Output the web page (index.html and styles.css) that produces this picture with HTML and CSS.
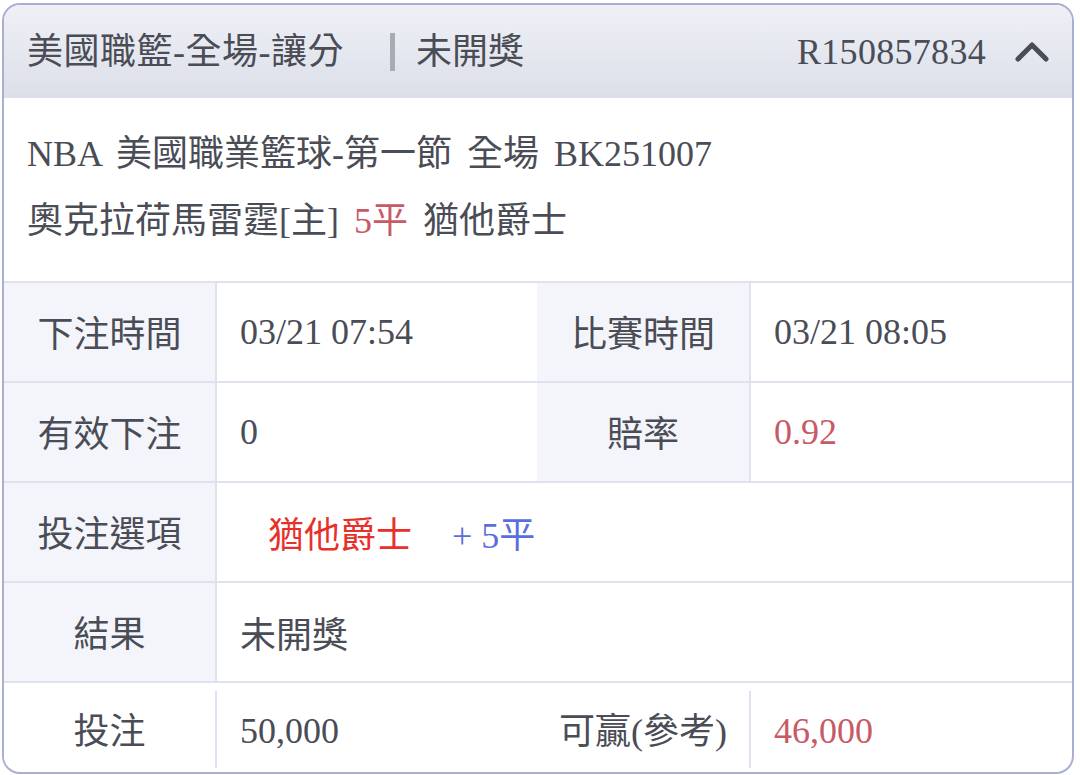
FILE: index.html
```html
<!DOCTYPE html>
<html lang="zh-Hant">
<head>
<meta charset="utf-8">
<title>注單</title>
<link rel="stylesheet" href="styles.css">
</head>
<body>
<div class="card">
  <div class="head">
    <span class="head-title">美國職籃-全場-讓分</span>
    <span class="head-bar"></span>
    <span class="head-status">未開獎</span>
    <span class="head-id">R150857834</span>
    <svg class="chev" width="34" height="22" viewBox="0 0 34 22"><polyline points="3,18 17,4 31,18" fill="none" stroke="#4a4c56" stroke-width="5" stroke-linecap="round" stroke-linejoin="round"/></svg>
  </div>
  <div class="info">
    <div class="info-line">NBA 美國職業籃球-第一節 全場 BK251007</div>
    <div class="info-line">奧克拉荷馬雷霆[主] <span class="red">5平</span> 猶他爵士</div>
  </div>
  <div class="grid">
    <div class="row">
      <div class="lab">下注時間</div>
      <div class="val">03/21 07:54</div>
      <div class="lab">比賽時間</div>
      <div class="val">03/21 08:05</div>
    </div>
    <div class="row">
      <div class="lab">有效下注</div>
      <div class="val">0</div>
      <div class="lab">賠率</div>
      <div class="val red">0.92</div>
    </div>
    <div class="row">
      <div class="lab">投注選項</div>
      <div class="val span3"><span class="pick">猶他爵士</span><span class="hcp">+ 5平</span></div>
    </div>
    <div class="row">
      <div class="lab">結果</div>
      <div class="val span3">未開獎</div>
    </div>
    <div class="row last">
      <div class="lab">投注</div>
      <div class="val">50,000</div>
      <div class="lab">可贏(參考)</div>
      <div class="val red">46,000</div>
    </div>
  </div>
</div>
</body>
</html>
```

FILE: styles.css
```css
html, body {
  margin: 0;
  padding: 0;
  background: #ffffff;
}
body {
  font-family: "Liberation Serif", "Noto Sans CJK TC", serif;
  color: #4a4c56;
  font-size: 36px;
}
.card {
  margin: 3px 6px 0 2px;
  height: 771px;
  box-sizing: border-box;
  border: 2px solid #a9aed3;
  border-radius: 18px;
  overflow: hidden;
  background: #ffffff;
}
.head {
  height: 93px;
  display: flex;
  align-items: center;
  padding: 0 23px 0 23px;
  background: linear-gradient(180deg, #eff0f5 0%, #e6e8f0 50%, #dcdee9 100%);
}
.head-title {
  line-height: 1;
  letter-spacing: 0.5px;
}
.head-bar {
  width: 5px;
  height: 38px;
  background: #a9abb4;
  margin: 0 21px 0 46px;
}
.head-status {
  line-height: 1;
}
.head-id {
  margin-left: auto;
  line-height: 1;
  letter-spacing: 0.3px;
}
.chev {
  margin-left: 29px;
  display: block;
}
.info {
  padding: 23px 0 26px 23px;
}
.info-line {
  line-height: 67px;
  white-space: nowrap;
  word-spacing: 6px;
}
.red {
  color: #c85a65;
}
.grid {
  display: flex;
  flex-direction: column;
}
.row {
  display: grid;
  grid-template-columns: 213px 320px 214px 1fr;
  height: 100px;
  box-sizing: border-box;
  border-top: 2px solid #dfe1ef;
}
.lab {
  display: flex;
  align-items: center;
  justify-content: center;
  background: #f4f5fa;
  border-right: 2px solid #dfe1ef;
  white-space: nowrap;
  padding-bottom: 3px;
}
.val {
  display: flex;
  align-items: center;
  padding-left: 23px;
  white-space: nowrap;
}
.val.span3 {
  grid-column: 2 / 5;
}
.pick {
  color: #e8302b;
  margin-left: 28px;
}
.hcp {
  color: #5a6ede;
  margin-left: 40px;
}
.row.last {
  height: 93px;
  padding: 8px 0 6px;
}
.row.last .lab {
  background: #ffffff;
}
.row.last .val {
  padding-top: 2px;
}
```
